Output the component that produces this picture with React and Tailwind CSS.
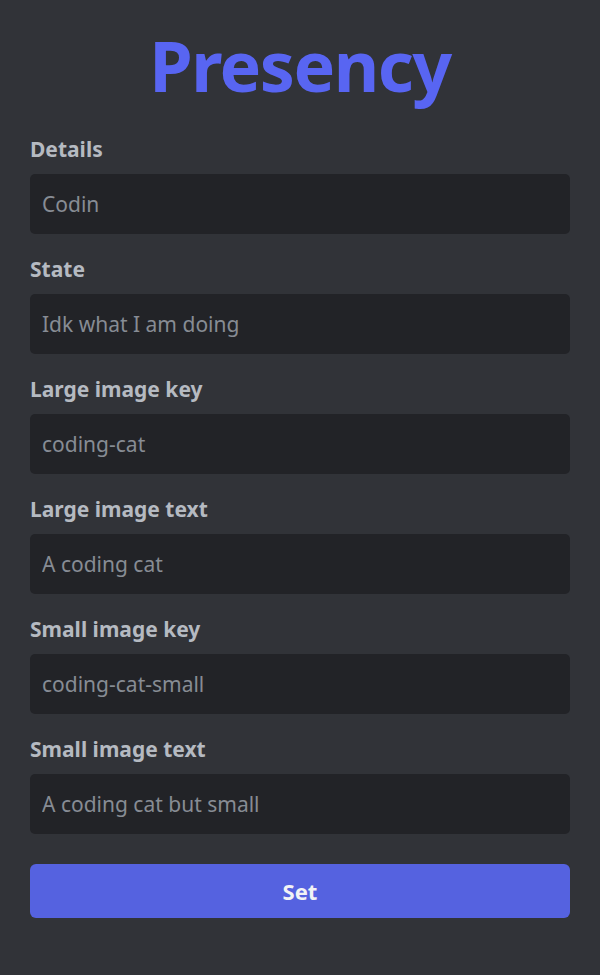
import { useState } from 'react'

const fields = [
  { label: 'Details', placeholder: 'Codin' },
  { label: 'State', placeholder: 'Idk what I am doing' },
  { label: 'Large image key', placeholder: 'coding-cat' },
  { label: 'Large image text', placeholder: 'A coding cat' },
  { label: 'Small image key', placeholder: 'coding-cat-small' },
  { label: 'Small image text', placeholder: 'A coding cat but small' },
]

function App() {
  const [values, setValues] = useState({})

  return (
    <div className="min-h-[975px] bg-[#313338] px-[30px] pt-[30px] font-['Noto_Sans',sans-serif]">
      <h1 className="text-center text-[70px] leading-none font-bold tracking-[-1.5px] text-[#5865f2] mb-[37px]">
        Presency
      </h1>

      <form className="flex flex-col gap-[23px]" onSubmit={(e) => e.preventDefault()}>
        {fields.map((field, index) => (
          <label key={index} className="flex flex-col gap-[13px]">
            <span className="text-[21px] leading-[24px] font-bold text-[#b5bac1]">
              {field.label}
            </span>
            <input
              type="text"
              value={values[index] || ''}
              onChange={(e) => setValues({ ...values, [index]: e.target.value })}
              placeholder={field.placeholder}
              className="h-[60px] rounded-[5px] bg-[#222327] px-[12px] text-[21px] text-[#dbdee1] placeholder:text-[#878c94] outline-none"
            />
          </label>
        ))}

        <button
          type="submit"
          className="mt-[7px] h-[54px] rounded-[6px] bg-[#5562e0] text-[22px] font-bold text-[#f2f3f5]"
        >
          Set
        </button>
      </form>
    </div>
  )
}

export default App
